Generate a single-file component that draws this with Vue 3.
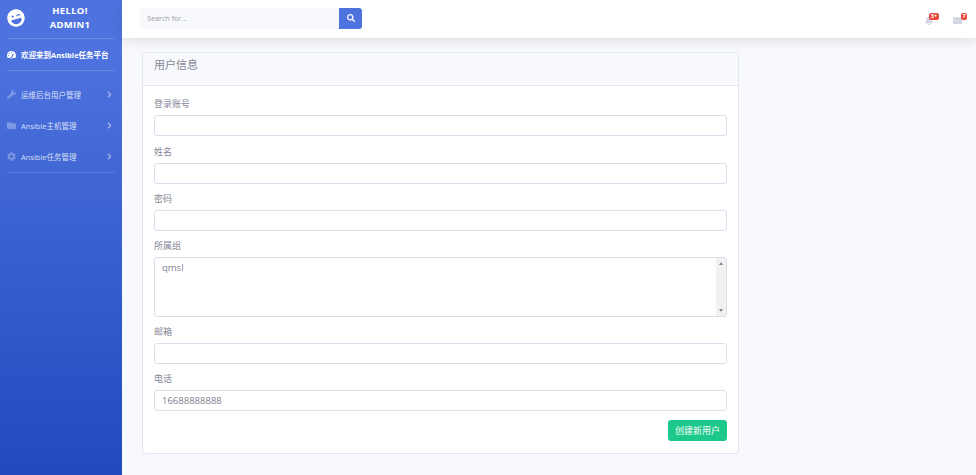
<script setup>
const menu = [
  { label: '运维后台用户管理', vb: '0 0 512 512', d: 'M507.73 109.1c-2.24-9.03-13.54-12.09-20.12-5.51l-74.36 74.36-67.88-11.31-11.31-67.88 74.36-74.36c6.62-6.62 3.43-17.9-5.66-20.16-47.38-11.74-99.55.91-136.58 37.93-39.64 39.64-50.55 97.1-34.05 147.2L18.74 402.76c-24.99 24.99-24.99 65.51 0 90.5 24.99 24.99 65.51 24.99 90.5 0l213.21-213.21c50.12 16.71 107.47 5.68 147.37-34.22 37.07-37.07 49.7-89.32 37.91-136.73zM64 472c-13.25 0-24-10.75-24-24 0-13.26 10.75-24 24-24s24 10.74 24 24c0 13.25-10.75 24-24 24z' },
  { label: 'Ansible主机管理', vb: '0 0 512 512', d: 'M464 128H272l-64-64H48C21.49 64 0 85.49 0 112v288c0 26.51 21.49 48 48 48h416c26.51 0 48-21.49 48-48V176c0-26.51-21.49-48-48-48z' },
  { label: 'Ansible任务管理', vb: '0 0 512 512', d: 'M487.4 315.7l-42.6-24.6c4.3-23.2 4.3-47 0-70.2l42.6-24.6c4.9-2.8 7.1-8.6 5.5-14-11.1-35.6-30-67.8-54.7-94.6-3.8-4.1-10-5.1-14.8-2.3L380.8 110c-17.9-15.4-38.5-27.3-60.8-35.1V25.8c0-5.6-3.9-10.5-9.4-11.7-36.7-8.2-74.3-7.8-109.2 0-5.5 1.2-9.4 6.1-9.4 11.7V75c-22.2 7.9-42.8 19.8-60.8 35.1L88.7 85.5c-4.9-2.8-11-1.9-14.8 2.3-24.7 26.7-43.6 58.9-54.7 94.6-1.7 5.4.6 11.2 5.5 14L67.3 221c-4.3 23.2-4.3 47 0 70.2l-42.6 24.6c-4.9 2.8-7.1 8.6-5.5 14 11.1 35.6 30 67.8 54.7 94.6 3.8 4.1 10 5.1 14.8 2.3l42.6-24.6c17.9 15.4 38.5 27.3 60.8 35.1v49.2c0 5.6 3.9 10.5 9.4 11.7 36.7 8.2 74.3 7.8 109.2 0 5.5-1.2 9.4-6.1 9.4-11.7v-49.2c22.2-7.9 42.8-19.8 60.8-35.1l42.6 24.6c4.9 2.8 11 1.9 14.8-2.3 24.7-26.7 43.6-58.9 54.7-94.6 1.5-5.5-.7-11.3-5.6-14.1zM256 336c-44.1 0-80-35.9-80-80s35.9-80 80-80 80 35.9 80 80-35.9 80-80 80z' },
]
const chevron = 'M285.476 272.971L91.132 467.314c-9.373 9.373-24.569 9.373-33.941 0l-22.667-22.667c-9.357-9.357-9.375-24.522-.04-33.901L188.505 256 34.484 101.255c-9.335-9.379-9.317-24.544.04-33.901l22.667-22.667c9.373-9.373 24.569-9.373 33.941 0L285.475 239.03c9.373 9.372 9.373 24.568.001 33.941z'
const before = [
  { label: '登录账号', value: '' },
  { label: '姓名', value: '' },
  { label: '密码', value: '' },
]
const after = [
  { label: '邮箱', value: '' },
  { label: '电话', value: '16688888888' },
]
</script>

<template>
  <div class="page">
    <aside class="sidebar">
      <div class="brand">
        <svg class="brand-icon" viewBox="0 0 496 512"><path fill="#fff" d="M248 8C111 8 0 119 0 256s111 248 248 248 248-111 248-248S385 8 248 8zm20.1 198.1c4-25.2 34.2-42.1 59.9-42.1s55.9 16.9 59.9 42.1c1.7 11.1-11.4 18.3-19.8 10.8l-9.5-8.5c-14.8-13.2-46.2-13.2-61 0L288 217c-8.4 7.4-21.6.3-19.9-10.9zM168 160c17.7 0 32 14.3 32 32s-14.3 32-32 32-32-14.3-32-32 14.3-32 32-32zm230.9 146C390 377 329.4 432 256 432h-16c-73.4 0-134-55-142.9-126-1.2-9.5 6.3-18 15.9-18h270c9.6 0 17.1 8.4 15.9 18z"/></svg>
        <div class="brand-text">HELLO!<br>ADMIN1</div>
      </div>
      <div class="divider"></div>
      <div class="nav-home">
        <svg class="nav-icon" viewBox="0 0 576 512"><path fill="#fff" fill-rule="evenodd" d="M288 32C128.94 32 0 160.94 0 320c0 52.8 14.25 102.26 39.06 144.8 5.61 9.62 16.3 15.2 27.44 15.2h443c11.14 0 21.83-5.58 27.44-15.2C561.75 422.26 576 372.8 576 320c0-159.06-128.94-288-288-288zM288 96a32 32 0 1 1 0 64 32 32 0 0 1 0-64zM96 352a32 32 0 1 1 0-64 32 32 0 0 1 0 64zm48-128a32 32 0 1 1 0-64 32 32 0 0 1 0 64zm246 61-61 184c18 28-4 62-41 62s-64-30-64-62 27-64 64-64h6l62-198c4-13 18-20 30-16s20 17 4 94zm18 3a32 32 0 1 1 64 0 32 32 0 0 1-64 0z"/></svg>
        <span>欢迎来到Ansible任务平台</span>
      </div>
      <div class="divider"></div>
      <nav class="nav">
        <div v-for="item in menu" :key="item.label" class="nav-item">
          <svg class="nav-icon muted" :viewBox="item.vb"><path :d="item.d"/></svg>
          <span class="nav-label">{{ item.label }}</span>
          <svg class="chev" viewBox="0 0 320 512"><path :d="chevron"/></svg>
        </div>
      </nav>
      <div class="divider"></div>
    </aside>

    <div class="main">
      <header class="topbar">
        <div class="search">
          <input class="search-input" placeholder="Search for..." />
          <button class="search-btn" type="button">
            <svg viewBox="0 0 512 512"><path fill="#fff" d="M505 442.7L405.3 343c-4.5-4.5-10.6-7-17-7H372c27.6-35.3 44-79.7 44-128C416 93.1 322.9 0 208 0S0 93.1 0 208s93.1 208 208 208c48.3 0 92.7-16.4 128-44v16.3c0 6.4 2.5 12.5 7 17l99.7 99.7c9.4 9.4 24.6 9.4 33.9 0l28.3-28.3c9.4-9.4 9.4-24.6.1-34zM208 336c-70.7 0-128-57.2-128-128 0-70.7 57.2-128 128-128 70.7 0 128 57.2 128 128 0 70.7-57.2 128-128 128z"/></svg>
          </button>
        </div>
        <div class="alerts">
          <div class="alert">
            <svg class="alert-icon bell" viewBox="0 0 448 512"><path d="M224 512c35.32 0 63.97-28.65 63.97-64H160.03c0 35.35 28.65 64 63.97 64zm215.39-149.71c-19.32-20.76-55.47-51.99-55.47-154.29 0-77.7-54.48-139.9-127.94-155.16V32c0-17.67-14.32-32-31.98-32s-31.98 14.33-31.98 32v20.84C118.56 68.1 64.08 130.3 64.08 208c0 102.3-36.15 133.53-55.47 154.29-6 6.45-8.66 14.16-8.61 21.71.11 16.4 12.98 32 32.1 32h383.8c19.12 0 32-15.6 32.1-32 .05-7.55-2.61-15.27-8.61-21.71z"/></svg>
            <span class="badge badge-wide">3+</span>
          </div>
          <div class="alert">
            <svg class="alert-icon env" viewBox="0 0 512 512"><path d="M502.3 190.8c3.9-3.1 9.7-.2 9.7 4.7V400c0 26.5-21.5 48-48 48H48c-26.5 0-48-21.5-48-48V195.6c0-5 5.7-7.8 9.7-4.7 22.4 17.4 52.1 39.5 154.1 113.6 21.1 15.4 56.7 47.8 92.2 47.6 35.7.3 72-32.8 92.3-47.6 102-74.1 131.6-96.3 154-113.7zM256 320c23.2.4 56.6-29.2 73.4-41.4 132.7-96.3 142.8-104.7 173.4-128.7 5.8-4.5 9.2-11.5 9.2-18.9v-19c0-26.5-21.5-48-48-48H48C21.5 64 0 85.5 0 112v19c0 7.4 3.4 14.3 9.2 18.9 30.6 23.9 40.7 32.4 173.4 128.7 16.8 12.2 50.2 41.8 73.4 41.4z"/></svg>
            <span class="badge badge-env">7</span>
          </div>
        </div>
      </header>

      <main class="content">
        <section class="card">
          <div class="card-header">用户信息</div>
          <form class="card-body" @submit.prevent>
            <div v-for="f in before" :key="f.label" class="field">
              <label>{{ f.label }}</label>
              <input class="control" :value="f.value" />
            </div>
            <div class="field">
              <label>所属组</label>
              <div class="listbox">
                <div class="listbox-text">qmsl</div>
                <div class="scroll">
                  <i class="arrow up"></i>
                  <i class="arrow down"></i>
                </div>
              </div>
            </div>
            <div v-for="f in after" :key="f.label" class="field">
              <label>{{ f.label }}</label>
              <input class="control" :value="f.value" />
            </div>
            <div class="actions">
              <button class="submit" type="button">创建新用户</button>
            </div>
          </form>
        </section>
      </main>
    </div>
  </div>
</template>

<style>
html, body { margin: 0; padding: 0; }
</style>

<style scoped>
.page {
  display: flex;
  height: 475px;
  overflow: hidden;
  background: #f8f9fc;
  color: #858796;
  font-family: "Open Sans", "Noto Sans CJK SC", sans-serif;
}
.sidebar {
  width: 122px;
  flex: none;
  display: flex;
  flex-direction: column;
  background: linear-gradient(180deg, #4e73df 10%, #224abe 100%);
}
.brand {
  height: 38px;
  display: flex;
  align-items: center;
  padding: 0 0 3px 7px;
  box-sizing: border-box;
}
.brand-icon {
  width: 18px;
  height: 18px;
  flex: none;
  transform: rotate(-15deg);
}
.brand-text {
  flex: 1;
  padding-right: 7px;
  text-align: center;
  color: #fff;
  font-size: 9.5px;
  font-weight: 700;
  line-height: 14px;
  letter-spacing: 0.3px;
}
.divider {
  height: 1px;
  margin: 0 7px;
  background: rgba(255, 255, 255, 0.15);
  flex: none;
}
.nav-home {
  height: 31px;
  box-sizing: border-box;
  padding: 0 0 1px 7px;
  display: flex;
  align-items: center;
  gap: 5px;
  color: #fff;
  font-size: 7.5px;
  font-weight: 700;
}
.nav-icon {
  width: 9px;
  height: 9px;
  flex: none;
}
.nav-icon.muted { fill: rgba(255, 255, 255, 0.3); }
.nav {
  display: flex;
  flex-direction: column;
  padding: 8px 0 0;
}
.nav-item {
  height: 31px;
  display: flex;
  align-items: center;
  gap: 5px;
  padding: 0 10px 0 7px;
  color: rgba(255, 255, 255, 0.8);
  font-size: 7.5px;
}
.nav-label { flex: 1; }
.chev {
  width: 5px;
  height: 7px;
  fill: rgba(255, 255, 255, 0.55);
}
.main {
  flex: 1;
  min-width: 0;
  display: flex;
  flex-direction: column;
}
.topbar {
  height: 38px;
  flex: none;
  box-sizing: border-box;
  display: flex;
  align-items: center;
  justify-content: space-between;
  padding: 0 14px 2px 18px;
  background: #fff;
  box-shadow: 0 2px 11px rgba(58, 59, 69, 0.15);
  position: relative;
}
.search {
  display: flex;
  width: 222px;
  height: 21px;
}
.search-input {
  flex: 1;
  min-width: 0;
  border: 0;
  outline: 0;
  padding: 0 7px;
  background: #f8f9fc;
  border-radius: 3px 0 0 3px;
  font: 7.2px "Open Sans", sans-serif;
  color: #858796;
}
.search-input::placeholder { color: #9a9ba8; opacity: 1; }
.search-btn {
  width: 23px;
  flex: none;
  padding: 0;
  border: 0;
  display: flex;
  align-items: center;
  justify-content: center;
  background: #4e73df;
  border-radius: 0 3px 3px 0;
}
.search-btn svg { width: 8px; height: 8px; }
.alerts {
  display: flex;
  gap: 19px;
  align-items: flex-start;
}
.alert {
  position: relative;
  width: 9px;
  height: 11px;
}
.alert-icon {
  position: absolute;
  left: 0;
  top: 3px;
  width: 9px;
  height: 9px;
  fill: #d1d3e2;
}
.bell { width: 8px; }
.badge {
  position: absolute;
  top: 0;
  height: 7px;
  line-height: 7px;
  border-radius: 2px;
  background: #e74a3b;
  color: #fff;
  font-size: 5.5px;
  font-weight: 700;
  text-align: center;
}
.badge-wide { left: 4px; width: 10px; }
.badge-env { left: 8px; width: 6px; }
.content {
  flex: 1;
  padding: 14px 20px;
}
.card {
  width: 597px;
  height: 402px;
  box-sizing: border-box;
  display: flex;
  flex-direction: column;
  background: #fff;
  border: 1px solid #e3e6f0;
  border-radius: 4px;
}
.card-header {
  height: 33px;
  flex: none;
  box-sizing: border-box;
  padding: 0 11px 10px;
  display: flex;
  align-items: center;
  font-size: 11px;
  background: #f8f9fc;
  border-bottom: 1px solid #e3e6f0;
  border-radius: 3px 3px 0 0;
}
.card-body {
  padding: 11.3px 11px 0;
  display: flex;
  flex-direction: column;
}
.field {
  display: flex;
  flex-direction: column;
  margin-bottom: 8.3px;
}
.field label {
  height: 15px;
  line-height: 14px;
  margin-bottom: 3px;
  font-size: 9px;
}
.control {
  height: 21px;
  box-sizing: border-box;
  padding: 0 7px;
  border: 1px solid #dcdfeb;
  border-radius: 3px;
  background: #fff;
  outline: 0;
  color: #7d7f8e;
  font: 9.5px "Open Sans", sans-serif;
}
.listbox {
  height: 59.5px;
  box-sizing: border-box;
  display: flex;
  border: 1px solid #dcdfeb;
  border-radius: 3px;
  overflow: hidden;
}
.listbox-text {
  flex: 1;
  padding: 3px 7px;
  font-size: 9.5px;
  line-height: 14px;
  color: #7d7f8e;
}
.scroll {
  width: 10px;
  flex: none;
  display: flex;
  flex-direction: column;
  justify-content: space-between;
  align-items: center;
  padding: 4px 0;
  background: #f1f1f1;
}
.arrow {
  width: 0;
  height: 0;
  border-left: 2.5px solid transparent;
  border-right: 2.5px solid transparent;
}
.arrow.up { border-bottom: 3px solid #8c8c8c; }
.arrow.down { border-top: 3px solid #8c8c8c; }
.actions {
  display: flex;
  justify-content: flex-end;
}
.submit {
  width: 59px;
  height: 21px;
  padding: 0;
  border: 0;
  border-radius: 3px;
  background: #1cc88a;
  color: #fff;
  font: 9px "Open Sans", "Noto Sans CJK SC", sans-serif;
}
</style>
